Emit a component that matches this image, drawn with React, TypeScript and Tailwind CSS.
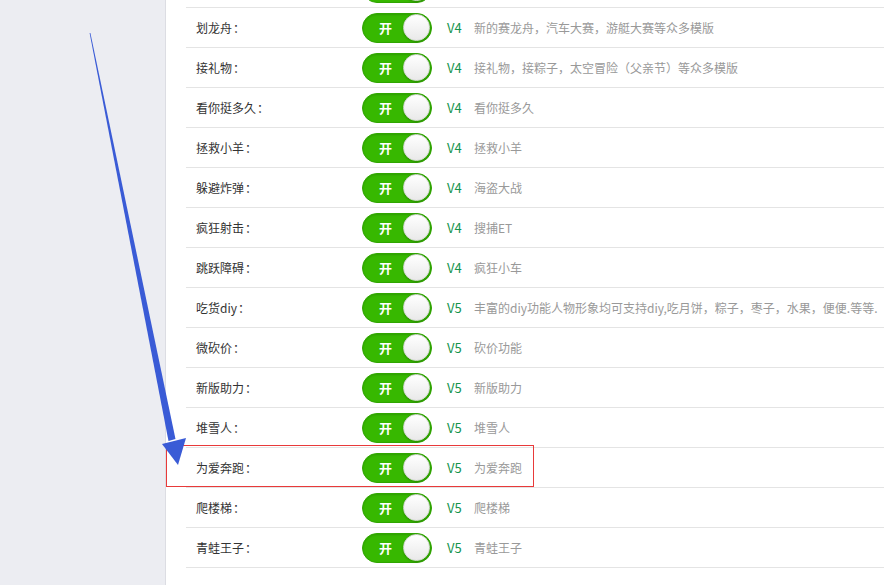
import React from "react";

type Game = { name: string; ver: string; desc: string };

const games: Game[] = [
  { name: "", ver: "", desc: "" },
  { name: "划龙舟", ver: "V4", desc: "新的赛龙舟，汽车大赛，游艇大赛等众多模版" },
  { name: "接礼物", ver: "V4", desc: "接礼物，接粽子，太空冒险（父亲节）等众多模版" },
  { name: "看你挺多久", ver: "V4", desc: "看你挺多久" },
  { name: "拯救小羊", ver: "V4", desc: "拯救小羊" },
  { name: "躲避炸弹", ver: "V4", desc: "海盗大战" },
  { name: "疯狂射击", ver: "V4", desc: "搜捕ET" },
  { name: "跳跃障碍", ver: "V4", desc: "疯狂小车" },
  { name: "吃货diy", ver: "V5", desc: "丰富的diy功能人物形象均可支持diy,吃月饼，粽子，枣子，水果，便便.等等." },
  { name: "微砍价", ver: "V5", desc: "砍价功能" },
  { name: "新版助力", ver: "V5", desc: "新版助力" },
  { name: "堆雪人", ver: "V5", desc: "堆雪人" },
  { name: "为爱奔跑", ver: "V5", desc: "为爱奔跑" },
  { name: "爬楼梯", ver: "V5", desc: "爬楼梯" },
  { name: "青蛙王子", ver: "V5", desc: "青蛙王子" },
];

function Toggle({ label }: { label: boolean }) {
  return (
    <div className="flex h-[30px] w-[70px] items-center justify-between rounded-full border border-[#2fa600] bg-[#37b800] pl-[16px] pr-[1px] shadow-[inset_0_1px_2px_rgba(0,0,0,0.15)]">
      <span className="text-[13px] font-bold text-white">{label ? "开" : ""}</span>
      <span className="h-[27px] w-[27px] rounded-full border border-[#d8d8d8] bg-[linear-gradient(#ffffff,#e9e9e9)] shadow-[0_1px_2px_rgba(0,0,0,0.25)]" />
    </div>
  );
}

function Row({ g }: { g: Game }) {
  return (
    <div className="flex h-[40px] items-center border-b border-[#e4e4e4] pl-[10px] text-[12px]">
      <div className="flex w-[166px] text-[#333]">
        {g.name && (
          <>
            <span>{g.name}</span>
            <span className="flex w-[14px] justify-center">：</span>
          </>
        )}
      </div>
      <Toggle label={g.name !== ""} />
      <div className="ml-[15px] w-[27px] text-[13px] text-[#15944c]">{g.ver}</div>
      <div className="whitespace-nowrap text-[#999]">{g.desc}</div>
    </div>
  );
}

export default function App() {
  return (
    <div
      className="relative flex h-[585px] w-[884px] overflow-hidden bg-white"
      style={{ fontFamily: '"Noto Sans CJK SC", "Noto Sans", sans-serif' }}
    >
      <div className="w-[166px] shrink-0 border-r border-[#dcdde3] bg-[#ecedf2]" />
      <div className="flex-1 pl-[20px]">
        <div className="-mt-[32px]">
          {games.map((g, i) => (
            <Row key={i} g={g} />
          ))}
        </div>
      </div>

      {/* annotation */}
      <div className="pointer-events-none absolute left-[166px] top-[445px] h-[42px] w-[368px] border border-[#e83a3a]" />
      <svg className="pointer-events-none absolute left-0 top-0" width="884" height="585">
        <polygon points="89.6,33 90.4,33 175.5,439 168.5,441" fill="#3a5bd6" />
        <polygon points="162,444 186,438 178,465" fill="#3a5bd6" />
      </svg>
    </div>
  );
}
